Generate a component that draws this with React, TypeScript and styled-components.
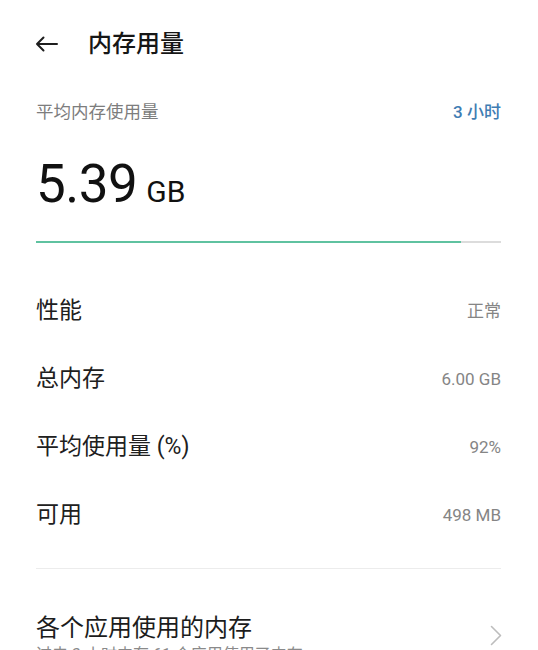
import React from "react";
import styled, { createGlobalStyle } from "styled-components";

const Global = createGlobalStyle`
  html, body {
    margin: 0;
    padding: 0;
    background: #ffffff;
  }
  body {
    font-family: Roboto, "Noto Sans CJK SC", "Noto Sans", sans-serif;
    color: #1a1a1a;
    -webkit-font-smoothing: antialiased;
  }
  * { box-sizing: border-box; }
`;

const Page = styled.div`
  width: 538px;
  height: 650px;
  overflow: hidden;
  background: #ffffff;
  display: flex;
  flex-direction: column;
  & > * {
    flex-shrink: 0;
  }
`;

const Header = styled.header`
  height: 88px;
  display: flex;
  align-items: center;
  padding-left: 35px;
  gap: 30px;
`;

const BackButton = styled.button`
  border: 0;
  background: transparent;
  padding: 0;
  width: 23px;
  height: 16px;
  display: flex;
  align-items: center;
  justify-content: center;
  cursor: pointer;
`;

const Title = styled.h1`
  margin: 0;
  font-size: 24px;
  line-height: 32px;
  font-weight: 500;
  color: #161616;
`;

const Content = styled.main`
  padding: 0 37px 0 36px;
  display: flex;
  flex-direction: column;
  & > * {
    flex-shrink: 0;
  }
`;

const SummaryHead = styled.div`
  height: 48px;
  display: flex;
  align-items: center;
  justify-content: space-between;
`;

const SummaryLabel = styled.span`
  font-size: 17.5px;
  line-height: 24px;
  color: #7d7d7d;
`;

const RangeLink = styled.span`
  font-size: 17px;
  line-height: 24px;
  font-weight: 500;
  color: #3f7db3;
`;

const BigValue = styled.div`
  margin-top: 22px;
  display: flex;
  align-items: baseline;
  gap: 9px;
  line-height: 53px;
  height: 53px;
`;

const BigNumber = styled.span`
  font-size: 53px;
  font-weight: 400;
  color: #111111;
  letter-spacing: -0.5px;
`;

const BigUnit = styled.span`
  font-size: 30px;
  font-weight: 400;
  color: #111111;
`;

const Track = styled.div`
  margin-top: 30px;
  height: 2px;
  background: #dcdcdc;
  display: flex;
`;

const Fill = styled.div`
  height: 100%;
  background: #5fc2a0;
`;

const StatList = styled.div`
  margin-top: 34px;
  display: flex;
  flex-direction: column;
`;

const StatRow = styled.div`
  height: 68px;
  flex-shrink: 0;
  display: flex;
  align-items: center;
  justify-content: space-between;
`;

const StatLabel = styled.span`
  font-size: 23px;
  line-height: 30px;
  color: #202020;
`;

const StatValue = styled.span`
  font-size: 17px;
  line-height: 24px;
  color: #858585;
`;

const Divider = styled.hr`
  margin: 19px 0 0;
  border: 0;
  height: 1px;
  background: #ececec;
`;

const NavItem = styled.div`
  padding-top: 44px;
  display: flex;
  align-items: center;
  justify-content: space-between;
`;

const NavText = styled.div`
  display: flex;
  flex-direction: column;
`;

const NavTitle = styled.span`
  font-size: 24px;
  line-height: 30px;
  color: #1c1c1c;
`;

const NavSub = styled.span`
  font-size: 16px;
  line-height: 24px;
  color: #8a8a8a;
`;

const Chevron = styled.span`
  display: flex;
  margin-bottom: 10px;
  margin-right: -1px;
`;

const stats = [
  { label: "性能", value: "正常" },
  { label: "总内存", value: "6.00 GB" },
  { label: "平均使用量 (%)", value: "92%" },
  { label: "可用", value: "498 MB" },
];

export default function App() {
  const used = 0.915;
  return (
    <>
      <Global />
      <Page>
        <Header>
          <BackButton aria-label="返回">
            <svg width="23" height="16" viewBox="0 0 23 16" fill="none">
              <path
                d="M22 8H2M8.5 1.5L2 8l6.5 6.5"
                stroke="#1e1e1e"
                strokeWidth="2"
                strokeLinecap="round"
                strokeLinejoin="round"
              />
            </svg>
          </BackButton>
          <Title>内存用量</Title>
        </Header>
        <Content>
          <SummaryHead>
            <SummaryLabel>平均内存使用量</SummaryLabel>
            <RangeLink>3 小时</RangeLink>
          </SummaryHead>
          <BigValue>
            <BigNumber>5.39</BigNumber>
            <BigUnit>GB</BigUnit>
          </BigValue>
          <Track>
            <Fill style={{ width: `${used * 100}%` }} />
          </Track>
          <StatList>
            {stats.map((s) => (
              <StatRow key={s.label}>
                <StatLabel>{s.label}</StatLabel>
                <StatValue>{s.value}</StatValue>
              </StatRow>
            ))}
          </StatList>
          <Divider />
          <NavItem>
            <NavText>
              <NavTitle>各个应用使用的内存</NavTitle>
              <NavSub>过去 3 小时内有 61 个应用使用了内存</NavSub>
            </NavText>
            <Chevron>
              <svg width="12" height="21" viewBox="0 0 12 21" fill="none">
                <path
                  d="M1.5 1.5l9 9-9 9"
                  stroke="#bdbdbd"
                  strokeWidth="1.6"
                  strokeLinecap="round"
                  strokeLinejoin="round"
                />
              </svg>
            </Chevron>
          </NavItem>
        </Content>
      </Page>
    </>
  );
}
